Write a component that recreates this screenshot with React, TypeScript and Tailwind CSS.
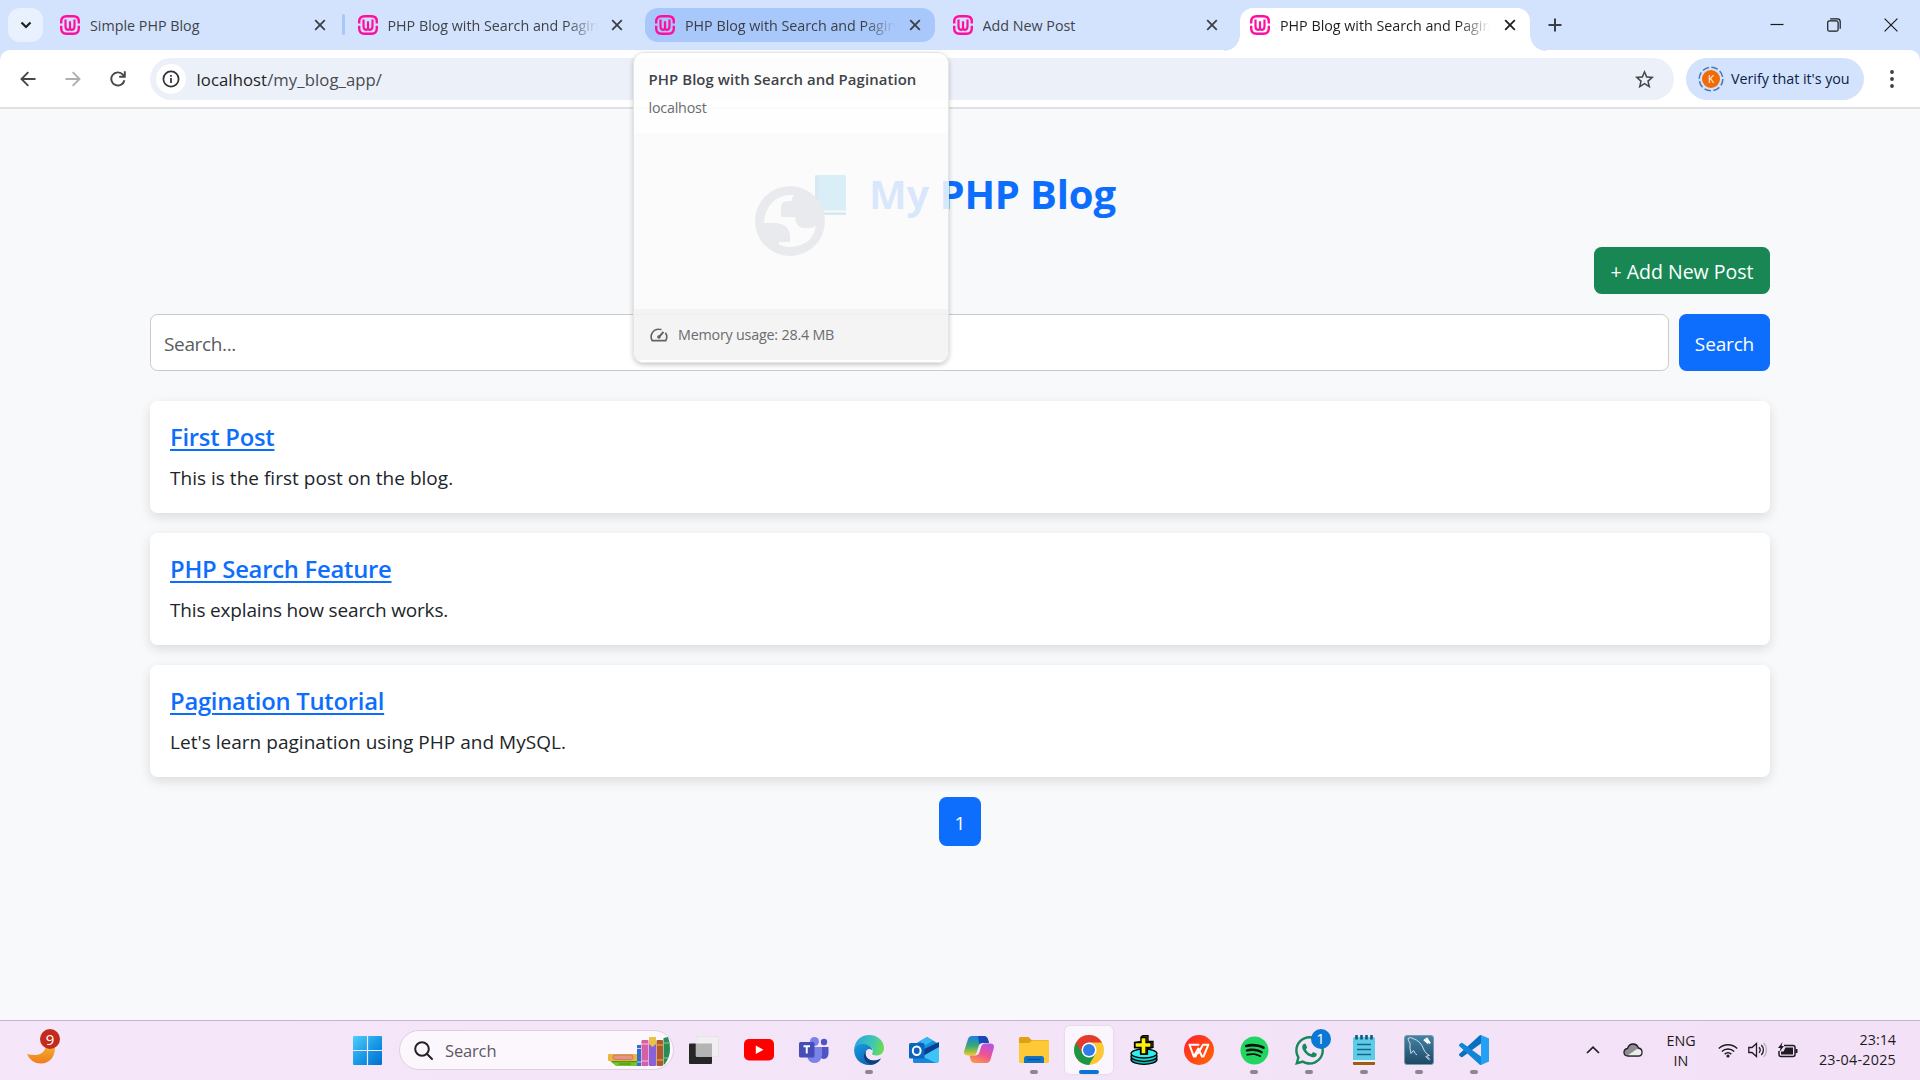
import type { ReactNode } from "react";
import { FaWhatsapp, FaSpotify } from "react-icons/fa";

function WampIcon() {
  return (
    <svg viewBox="0 0 20 20" className="h-5 w-5 shrink-0" fill="none" stroke="#ff0fa0">
      <path
        d="M1.200 8.400V6.500Q1.200 1.300 6.500 1.300H13.500Q18.800 1.300 18.800 6.500V8.400M1.200 10.800V13.500Q1.200 18.700 6.500 18.700H13.500Q18.800 18.700 18.800 13.500V10.800"
        strokeWidth="2.400"
      />
      <path d="M5.500 4.600V11Q5.500 14.800 8 14.800Q10 14.800 10 12.200V6.200V12.200Q10 14.800 12 14.800Q14.500 14.800 14.500 11V4.600" strokeWidth="2.200" />
    </svg>
  );
}

function Cross({ color }: { color: string }) {
  return (
    <svg viewBox="0 0 12 12" className="h-3 w-3 shrink-0" stroke={color} strokeWidth="1.800">
      <path d="M1.200 1.200L10.800 10.800M10.800 1.200L1.200 10.800" />
    </svg>
  );
}

function Tab({ title, state = "idle", fade }: { title: string; state?: "idle" | "hover" | "active"; fade?: boolean }) {
  const bg =
    state === "active"
      ? "bg-white rounded-t-[13px] h-[43px] pb-[9px] text-[#1f1f1f]"
      : state === "hover"
        ? "bg-[#a8c7fa] rounded-[13px] h-[34px] text-[#3b3f45]"
        : "h-[34px] text-[#3f4349]";
  return (
    <div className={`relative flex w-[290px] shrink-0 items-center pl-[10px] pr-[14.5px] ${bg}`}>
      {state === "active" && (
        <>
          <span className="absolute -left-4 bottom-0 h-4 w-4 bg-[radial-gradient(circle_at_0_0,#d3e3fd_15.5px,#fff_16px)]" />
          <span className="absolute -right-4 bottom-0 h-4 w-4 bg-[radial-gradient(circle_at_100%_0,#d3e3fd_15.5px,#fff_16px)]" />
        </>
      )}
      <WampIcon />
      <div
        className={`mt-[2px] ml-[10px] w-[210px] overflow-hidden text-[14.3px] leading-5 whitespace-nowrap ${
          fade ? "tracking-[-0.01px] [mask-image:linear-gradient(90deg,#000_85%,transparent)]" : ""
        }`}
      >
        {title}
      </div>
      <span className="ml-auto">
        <Cross color={state === "active" ? "#1f1f1f" : "#3b3f45"} />
      </span>
    </div>
  );
}

function TabStrip() {
  return (
    <div className="flex h-[50px] items-start bg-[#d3e3fd] pl-2 pt-2">
      <div className="flex h-[34px] w-[35px] items-center justify-center rounded-[12px] bg-[#e9f1fe]">
        <svg viewBox="0 0 12 8" className="h-2 w-3" fill="none" stroke="#1f1f1f" strokeWidth="2.2">
          <path d="M1.500 1.500L6 6L10.500 1.500" />
        </svg>
      </div>
      <div className="ml-[7px] flex">
        <Tab title="Simple PHP Blog" />
        <div className="flex w-[7.5px] justify-center pt-[6px]">
          <span className="h-[21px] w-[3px] rounded-full bg-[#a8c7fa]" />
        </div>
        <Tab title="PHP Blog with Search and Pagination" fade />
        <div className="w-[7.5px]" />
        <Tab title="PHP Blog with Search and Pagination" state="hover" fade />
        <div className="w-[7.5px]" />
        <Tab title="Add New Post" />
        <div className="w-[7.5px]" />
        <Tab title="PHP Blog with Search and Pagination" state="active" fade />
      </div>
      <svg viewBox="0 0 14 14" className="ml-[18px] mt-[10px] h-[14px] w-[14px]" stroke="#3b3f45" strokeWidth="2">
        <path d="M7 .5V13.500M.5 7H13.500" />
      </svg>
      <div className="ml-auto mr-[22px] mt-[9.5px] flex gap-[43px]">
        <svg viewBox="0 0 14 14" className="h-[14px] w-[14px]" stroke="#1a1a1a" strokeWidth="1.200">
          <path d="M.5 6.500H13.500" />
        </svg>
        <svg viewBox="0 0 14 14" className="h-[14px] w-[14px]" fill="none" stroke="#1a1a1a" strokeWidth="1.200">
          <rect x=".7" y="2.800" width="10.400" height="10.400" rx="1.800" />
          <path d="M3.200 .8H10.400Q13.200 .8 13.200 3.600V10.800" />
        </svg>
        <svg viewBox="0 0 14 14" className="h-[14px] w-[14px]" stroke="#1a1a1a" strokeWidth="1.200">
          <path d="M.6 .6L13.400 13.400M13.400 .6L.6 13.400" />
        </svg>
      </div>
    </div>
  );
}

function Toolbar() {
  return (
    <div className="bg-[#d3e3fd]">
      <div className="flex h-[59px] items-center rounded-t-[10px] border-b-2 border-[#e0e1e2] bg-white pl-[20px] pr-[25px]">
        <svg viewBox="0 0 16 16" className="h-4 w-4" fill="none" stroke="#474747" strokeWidth="1.900">
          <path d="M15.500 8H1.800M8.300 1.200L1.500 8L8.300 14.800" />
        </svg>
        <svg viewBox="0 0 16 16" className="ml-[28.5px] h-4 w-4" fill="none" stroke="#adafb2" strokeWidth="1.900">
          <path d="M.5 8H14.200M7.700 1.200L14.500 8L7.700 14.800" />
        </svg>
        <svg viewBox="0 0 16 16" className="ml-[29px] h-4 w-4" fill="none" stroke="#474747" strokeWidth="1.900">
          <path d="M14.400 9.200A6.600 6.600 0 1 1 12.900 3.600L14.600 5.400M14.800 .3V5.800H9.200" />
        </svg>
        <div className="mt-[1px] ml-[24.5px] flex h-[42px] w-[1524px] items-center rounded-full bg-[#ecf0f9] pl-[6px] pr-[18px]">
          <span className="flex h-[30px] w-[30px] items-center justify-center rounded-full bg-white">
            <svg viewBox="0 0 18 18" className="h-[18px] w-[18px]" fill="none" stroke="#303134" strokeWidth="1.700">
              <circle cx="9" cy="9" r="7.600" />
              <path d="M9 8V13M9 5V6.700" />
            </svg>
          </span>
          <span className="mt-[1px] ml-[10.5px] text-[16.7px] leading-6 tracking-[0.08px] text-[#484b50]">
            <span className="text-[#1f1f1f]">localhost</span>/my_blog_app/
          </span>
          <svg viewBox="0 0 24 24" className="ml-auto h-[23px] w-[23px]" fill="#474747">
            <path d="M22 9.240l-7.190-.62L12 2 9.190 8.630 2 9.240l5.460 4.730L5.820 21 12 17.270 18.180 21l-1.630-7.030L22 9.240zM12 15.400l-3.760 2.270 1-4.280-3.320-2.880 4.380-.38L12 6.100l1.710 4.040 4.380.38-3.320 2.880 1 4.280L12 15.400z" />
          </svg>
        </div>
        <div className="ml-3 flex h-[42px] w-[178px] items-center rounded-full bg-[#d3e3fd] pl-3">
          <span className="relative flex h-[26px] w-[26px] items-center justify-center">
            <svg viewBox="0 0 26 26" className="h-[26px] w-[26px]">
              <circle cx="13" cy="13" r="11.800" fill="none" stroke="#4f75b0" strokeWidth="1.500" strokeDasharray="6.700 2.570" />
              <circle cx="13" cy="13" r="9" fill="#f26c05" />
            </svg>
            <span className="absolute text-[10px] leading-none text-white">K</span>
          </span>
          <span className="ml-[7px] text-[14.3px] leading-5 tracking-[-0.03px] whitespace-nowrap text-[#0a2149]">
            Verify that it's you
          </span>
        </div>
        <svg viewBox="0 0 4 18" className="ml-auto h-[18px] w-[6px]" fill="#3c4043">
          <circle cx="2" cy="2" r="1.900" />
          <circle cx="2" cy="9" r="1.900" />
          <circle cx="2" cy="16" r="1.900" />
        </svg>
      </div>
    </div>
  );
}

function HoverCard() {
  return (
    <div className="absolute top-[52px] left-[633px] flex h-[311px] w-[316px] flex-col overflow-hidden rounded-[11px] border border-[#e4e5e7] shadow-[0_2px_5px_rgba(0,0,0,0.22)]">
      <div className="h-[80px] bg-white/86 pt-[16px] pl-[14.5px]">
        <div className="text-[14.9px] leading-5 font-semibold tracking-[0.09px] whitespace-nowrap text-[#3f4348]">
          PHP Blog with Search and Pagination
        </div>
        <div className="mt-[9px] text-[14.3px] leading-5 tracking-[-0.2px] text-[#6a6c70]">localhost</div>
      </div>
      <div className="flex h-[176px] items-center justify-center bg-[#fcfcfc]/86 pr-[2px]">
        <svg viewBox="0 0 70 70" className="h-[70px] w-[70px]">
          <path
            fill="#e9eaee"
            fillRule="evenodd"
            d="M35 0A35 35 0 1 1 35 70A35 35 0 1 1 35 0ZM36 9C22 9 10 19 9 37H20Q35 38 35 51V56H24V58.500Q29 61 35 61Q58 60 61 39Q59 42 54 42H48Q40 40 40 31H26V21Q26 15 34 15H36.500Q37 12 39 9Z"
          />
        </svg>
      </div>
      <div className="flex h-[51px] items-center bg-[#f2f2f2]/86 pl-[15.5px]">
        <svg viewBox="0 0 18 14" className="h-[14px] w-[18px]" fill="none" stroke="#5f6368" strokeWidth="1.600">
          <path d="M11.500 1.500Q10.500 1.200 9 1.200A7.600 7.600 0 0 0 2.200 12.600H15.800A7.600 7.600 0 0 0 15.400 4.800" />
          <path d="M8.700 9.300L13.500 3.800" strokeWidth="2" />
          <circle cx="8.900" cy="9" r="1" fill="#5f6368" />
        </svg>
        <span className="ml-[10.5px] text-[14.3px] leading-5 tracking-[-0.2px] whitespace-nowrap text-[#6a6c70]">
          Memory usage: 28.4 MB
        </span>
      </div>
      <div className="flex-1 bg-white/90" />
    </div>
  );
}

const posts = [
  { title: "First Post", text: "This is the first post on the blog.", tracking: "tracking-[0.02px]" },
  { title: "PHP Search Feature", text: "This explains how search works.", tracking: "tracking-[-0.17px]" },
  { title: "Pagination Tutorial", text: "Let's learn pagination using PHP and MySQL.", tracking: "tracking-[0.03px]" },
];

function BlogPage() {
  return (
    <main className="h-[911px] bg-[#f8f9fb] px-[150px] pt-[57px]">
      <h1 className="flex h-[56px] items-center pl-[665px]">
        <svg viewBox="0 0 31 40" className="mt-[1px] h-10 w-[31px]">
          <rect width="31" height="40" rx="2" fill="#0a9cd4" />
          <rect width="4" height="40" rx="1.500" fill="#0878ad" />
          <rect x="2" y="35.500" width="29" height="2" fill="#e8f4fa" />
          <rect x="2" y="37.500" width="29" height="2.500" rx="1" fill="#0878ad" />
        </svg>
        <span className="ml-[23px] text-[40px] leading-[56px] font-bold tracking-[-0.15px] whitespace-nowrap text-[#0d6efd]">
          My PHP Blog
        </span>
      </h1>
      <div className="mt-[25px] flex justify-end">
        <button className="flex h-[47px] w-[176px] items-center justify-center rounded-[7.5px] bg-[#198754] pt-[3px] text-[19.5px] text-white">
          + Add New Post
        </button>
      </div>
      <div className="mt-5 flex gap-[10px]">
        <div className="flex h-[57px] flex-1 items-center rounded-[7.5px] border border-[#c9cacc] bg-white pt-[3px] pl-[13px] text-[19px] tracking-[-0.35px] text-[#595c5f]">
          Search...
        </div>
        <button className="flex h-[57px] w-[91px] items-center justify-center rounded-[7.5px] bg-[#0d6efd] pt-[3px] text-[19px] tracking-[-0.15px] text-white">
          Search
        </button>
      </div>
      <div className="mt-[30px] flex flex-col gap-5">
        {posts.map((p) => (
          <article key={p.title} className="h-[112px] rounded-[7.5px] bg-white px-5 pt-5 shadow-[0_4px_12px_rgba(0,0,0,0.12)]">
            <h2 className="text-[23.8px] leading-[33px] font-semibold tracking-[-0.25px] text-[#0d6efd]">
              <span className="underline decoration-2 underline-offset-[3px]">{p.title}</span>
            </h2>
            <p className="mt-[9px] text-[19px] leading-[30px] text-[#212529]">
              <span className={p.tracking}>{p.text}</span>
            </p>
          </article>
        ))}
      </div>
      <div className="mt-5 flex justify-center">
        <span className="flex h-[49px] w-[42px] items-center justify-center rounded-[7.5px] bg-[#0d6efd] pt-[3px] text-[19px] text-white">1</span>
      </div>
    </main>
  );
}

function AppSlot({ children, running, active }: { children: ReactNode; running?: boolean; active?: boolean }) {
  return (
    <div className="relative flex w-[55px] items-center justify-center">
      <div className={`flex h-12 w-12 items-center justify-center rounded-[5px] ${active ? "bg-white/65 shadow-[0_0_2px_rgba(0,0,0,0.15)]" : ""}`}>
        {children}
      </div>
      {running && <span className="absolute bottom-0 h-1 w-2 rounded-full bg-[#8f8592]" />}
      {active && <span className="absolute bottom-0 h-1 w-5 rounded-full bg-[#0a74d4]" />}
    </div>
  );
}

const sq = "h-[30px] w-[30px]";

function TaskApps() {
  return (
    <div className="ml-[2.5px] flex h-12">
      <AppSlot>
        <svg viewBox="0 0 30 30" className={sq}>
          <rect y="8.500" width="23" height="20.500" rx="1" fill="#262626" />
          <rect x="7" y="1.500" width="22.500" height="20" rx="1" fill="#f0eef1" stroke="#dcd8de" strokeWidth=".5" />
          <rect x="7" y="8.500" width="16" height="13" fill="#b4b4b4" />
        </svg>
      </AppSlot>
      <AppSlot>
        <svg viewBox="0 0 30 30" className={sq}>
          <rect y="4" width="30" height="21.500" rx="5" fill="#f00" />
          <path d="M11.800 10.500V19L19.500 14.800Z" fill="#fff" />
        </svg>
      </AppSlot>
      <AppSlot>
        <svg viewBox="0 0 30 30" className={sq}>
          <circle cx="25" cy="7" r="3.200" fill="#4f55c4" />
          <path d="M20 12H29.500V19Q29 24 24 24L20 22Z" fill="#4f55c4" />
          <circle cx="15.500" cy="6.500" r="4.500" fill="#7b83eb" />
          <path d="M8 12H23V20Q22 28 15.500 28Q9 28 8 20Z" fill="#7b83eb" />
          <rect y="7" width="15.500" height="15.500" rx="1.500" fill="#454db8" />
          <path d="M4.500 11.300H11M7.750 11V18.500" stroke="#fff" strokeWidth="1.900" />
        </svg>
      </AppSlot>
      <AppSlot running>
        <svg viewBox="0 0 30 30" className={sq}>
          <defs>
            <linearGradient id="edgeTop" x1="0" y1="0.300" x2="1" y2="0.500">
              <stop offset="0" stopColor="#2ba6e0" />
              <stop offset=".6" stopColor="#3cc7b5" />
              <stop offset="1" stopColor="#6fdc4e" />
            </linearGradient>
            <linearGradient id="edgeLow" x1="0" y1="0" x2="0.800" y2="1">
              <stop offset="0" stopColor="#1a9be0" />
              <stop offset="1" stopColor="#0a5bb0" />
            </linearGradient>
          </defs>
          <path d="M.2 14C1 5.500 7 0 15 0C24 0 30 6 30 13C30 18 26.500 20.500 22.500 20.500C19.500 20.500 17.800 19.500 18 18.500C19.500 17 19.500 12 14 10.500C8 9 1.500 11 .2 14Z" fill="url(#edgeTop)" />
          <path d="M.2 14C2 9.500 8 8 13 9.800C16.500 11 18.500 13.500 18.500 16C16 12 11 14.500 11.500 19C12 24.500 19 28 27 23.500C24 28 20 30 15 30C6 30 -.5 23 .2 14Z" fill="url(#edgeLow)" />
          <path d="M11.500 19C12 24.500 19 28 27 23.500C24.500 27.500 21.500 29 18 29.700C10 28 7.500 20 12.500 15.500C11.700 16.500 11.400 17.800 11.500 19Z" fill="#12407c" />
        </svg>
      </AppSlot>
      <AppSlot>
        <svg viewBox="0 0 30 30" className={sq}>
          <path d="M6 9L18 2L30 9V15H6Z" fill="#1490df" />
          <path d="M12 5.500L18 2L24 5.500L12 13Z" fill="#35b8f1" />
          <path d="M4 27V20L13 17L30 12V26Q30 28 28 28H6Q4 28 4 27Z" fill="#3dc3f5" />
          <path d="M13 15L30 7V12L14 21Z" fill="#0a3f8f" />
          <path d="M4 17L27 28H6Q4 28 4 26Z" fill="#1a86d8" />
          <rect y="8" width="15.500" height="15.500" rx="1.500" fill="#0b64bd" />
          <ellipse cx="7.700" cy="15.700" rx="3.900" ry="4.300" fill="none" stroke="#fff" strokeWidth="2" />
        </svg>
      </AppSlot>
      <AppSlot>
        <svg viewBox="0 0 30 30" className={sq}>
          <defs>
            <linearGradient id="copA" x1="0" y1="0" x2="0" y2="1">
              <stop offset="0" stopColor="#1b7fe6" />
              <stop offset=".5" stopColor="#35a878" />
              <stop offset="1" stopColor="#e8d022" />
            </linearGradient>
            <linearGradient id="copB" x1="0.700" y1="0" x2="0.200" y2="1">
              <stop offset="0" stopColor="#b653e0" />
              <stop offset=".5" stopColor="#ee5590" />
              <stop offset="1" stopColor="#fb9a4b" />
            </linearGradient>
          </defs>
          <path d="M8 1H20Q23 1 24 4.500L25 8H18Q15.500 8 14.700 11L12.500 18Q11.500 20.500 9 20.500H4Q-1 20.500 .3 15.500L4 4Q5 1 8 1Z" fill="url(#copA)" />
          <path d="M14 1H20Q23 1 24 4.500L25 8H18Q16 8 15.300 9.500Z" fill="#1847b8" />
          <path d="M22 28H10.500Q7.500 28 6.500 24.500L5.500 20.500H11Q14.500 20.500 15.300 17.500L17.300 11Q18 8.500 21 8.500H26Q31 8.500 29.700 13.500L26.500 24.500Q25.500 28 22 28Z" fill="url(#copB)" />
        </svg>
      </AppSlot>
      <AppSlot running>
        <svg viewBox="0 0 30 30" className={sq}>
          <path d="M0 3.500Q0 2 1.500 2H9.500L12.500 5H28Q30 5 30 7V12H0Z" fill="#e0a00f" />
          <path d="M0 8H10L13 5.500H28.500Q30 5.500 30 7V26.500Q30 28 28.500 28H1.500Q0 28 0 26.500Z" fill="#fdc936" />
          <path d="M5 28V23.500Q5 21 7.500 21H22.500Q25 21 25 23.500V28Z" fill="#1272c4" />
          <path d="M8.500 24.500H21.500" stroke="#0b4f8f" strokeWidth="1.200" />
        </svg>
      </AppSlot>
      <AppSlot active>
        <svg viewBox="0 0 30 30" className={sq}>
          <circle cx="15" cy="15" r="15" fill="#fcc934" />
          <path d="M2.010 7.500A15 15 0 0 0 15 30L21.500 18.750L15 15Z" fill="#1e9446" />
          <path d="M2.010 7.500A15 15 0 0 1 28 7.500H15L8.500 18.750Z" fill="#e33b2e" />
          <circle cx="15" cy="15" r="7.500" fill="#fff" />
          <circle cx="15" cy="15" r="6" fill="#2f7de9" />
        </svg>
      </AppSlot>
      <AppSlot>
        <svg viewBox="0 0 30 30" className={sq} stroke="#000" strokeWidth="1.300">
          <ellipse cx="15" cy="24.500" rx="13" ry="4.800" fill="#12b5b5" />
          <ellipse cx="15" cy="21.500" rx="13" ry="4.800" fill="#19dada" />
          <ellipse cx="15" cy="18.500" rx="13" ry="4.500" fill="#2ff0f0" />
          <path d="M12.500 1.500L14 .7H19V6.500H24V12.500L18.500 13.500V19H11.500V12.500H5.500V7.500L12.500 6.500Z" fill="#6b6500" />
          <path d="M12 2.500H17V7.500H22V12.500H17V19H12V12.500H6V7.500H12Z" fill="#ffef0a" />
        </svg>
      </AppSlot>
      <AppSlot>
        <svg viewBox="0 0 30 30" className={sq} fill="none">
          <defs>
            <linearGradient id="wps" x1="0" y1="0" x2="1" y2="1">
              <stop offset="0" stopColor="#ff1f2d" />
              <stop offset="1" stopColor="#ff6a00" />
            </linearGradient>
          </defs>
          <circle cx="15" cy="15" r="15" fill="url(#wps)" />
          <path d="M5.500 9.800H14.500M5.500 9.800L9.800 21.500L14.300 13.500L18 21.500H19.500L24.300 9.800H19L14.300 18M9.800 21.500H11.500L13 18.500" stroke="#fff" strokeWidth="2" strokeLinejoin="round" strokeLinecap="round" />
        </svg>
      </AppSlot>
      <AppSlot running>
        <span className="relative flex h-[29px] w-[29px] items-center justify-center">
          <span className="absolute h-6 w-6 rounded-full bg-[#111]" />
          <FaSpotify className="relative h-[29px] w-[29px] text-[#1fd660]" />
        </span>
      </AppSlot>
      <AppSlot running>
        <span className="relative">
          <FaWhatsapp className="h-[33px] w-[33px] text-[#16895a]" />
          <span className="absolute -top-[5px] -right-[5px] flex h-5 w-5 items-center justify-center rounded-full bg-[#0a78d4] text-[15px] leading-none text-white">
            1
          </span>
        </span>
      </AppSlot>
      <AppSlot running>
        <svg viewBox="0 0 22 30" className="h-[30px] w-[22px]">
          <rect y="26" width="22" height="4" rx="1" fill="#a35a14" />
          <rect y="2" width="22" height="25" rx="1.500" fill="#5fcbe6" />
          <rect y="25" width="22" height="2" fill="#e9f3f6" />
          <path d="M4 9.500H18M4 14.500H18M4 19.500H18" stroke="#11678c" strokeWidth="1.700" />
          <path d="M3.500 0V4.500M8.500 0V4.500M13.500 0V4.500M18.500 0V4.500" stroke="#0d5878" strokeWidth="2.500" />
        </svg>
      </AppSlot>
      <AppSlot running>
        <svg viewBox="0 0 30 30" className={sq} fill="none">
          <defs>
            <linearGradient id="mysql" x1="0" y1="0" x2="0" y2="1">
              <stop offset="0" stopColor="#4583a5" />
              <stop offset="1" stopColor="#1d4866" />
            </linearGradient>
          </defs>
          <rect x=".5" y=".5" width="29" height="29" rx="2.500" fill="url(#mysql)" stroke="#7f98a8" />
          <path d="M4 3.500Q6 1.500 9 3.500Q17 6 20 15Q21 18 25.500 20.500L22.500 21L26 24.500M4 3.500Q4 6 6 8Q5.500 13 7 18.500L9.500 15.500Q11 19 13 20M21.500 21.500L25.500 25" stroke="#cfe0ea" strokeWidth="1" />
          <path d="M20 4.500L23 7L22.500 3L26 8.500" stroke="#fff" strokeWidth="2" />
        </svg>
      </AppSlot>
      <AppSlot running>
        <svg viewBox="0 0 30 30" className={sq}>
          <path d="M22 0L30 3.500V26.500L22 30Z" fill="#25a1f3" />
          <path d="M22 0V8.500L3.500 22Q2.500 22.500 1.700 21.800L.3 20.500Q-.5 19.500 .5 18.700L20.500 .6Q21.200 0 22 0Z" fill="#0b6fc0" />
          <path d="M22 30V21.500L3.500 8Q2.500 7.500 1.700 8.200L.3 9.500Q-.5 10.500 .5 11.300L20.500 29.400Q21.200 30 22 30Z" fill="#0f86d6" />
        </svg>
      </AppSlot>
    </div>
  );
}

function Books() {
  return (
    <svg viewBox="0 0 64 30" className="h-[30px] w-16">
      <rect x="1" y="17" width="30" height="7" rx="1" fill="#e8b93c" />
      <rect x="6" y="18" width="20" height="4.500" rx="2" fill="#e89386" stroke="#b8604c" strokeWidth=".6" />
      <path d="M3 24H31V29H9Z" fill="#7cc22b" />
      <path d="M5 24.700H30M12 27H24" stroke="#3f8a1e" strokeWidth="1" />
      <rect x="30" y="8" width="4" height="21" fill="#2f6fd0" />
      <path d="M30 11.500H34M30 25H34" stroke="#bcd6f5" strokeWidth="1" />
      <rect x="34.500" y="3" width="7" height="26" rx="1" fill="#d660a8" />
      <path d="M34.500 7H41.500M34.500 24H41.500" stroke="#f4c4de" strokeWidth="1.200" />
      <rect x="42" y="0" width="7" height="29" rx="1" fill="#8a62d8" />
      <path d="M42 0H49V7L45.500 10L42 7Z" fill="#e9c04a" />
      <rect x="49.500" y="3" width="6.500" height="26" rx="1" fill="#b3582c" />
      <path d="M49.500 8H56M49.500 23H56" stroke="#e8b93c" strokeWidth="1.200" />
      <path d="M56.500 1L61 0Q63 5 63 12Q63 20 58 27L56.500 28Z" fill="#2a8c55" />
      <path d="M57 6H62M57 21H61" stroke="#8fd08f" strokeWidth="1.200" />
    </svg>
  );
}

function Taskbar() {
  return (
    <footer className="flex h-[60px] items-start border-t border-[#c3b5ca] bg-linear-to-r from-[#f5e6f9] to-[#f3e2f7] pt-[5px] text-[#1f1b22]">
      <div className="relative mt-[15px] ml-[27px] h-6 w-7">
        <svg viewBox="0 0 28 24" className="h-6 w-7">
          <defs>
            <linearGradient id="moon" x1="0" y1="0" x2="0" y2="1">
              <stop offset="0" stopColor="#f3b63a" />
              <stop offset="1" stopColor="#ee7d1b" />
            </linearGradient>
          </defs>
          <path d="M0 13Q4 22.500 14 22.500Q27 22 28 7L20 2Q18 14 8 14Q3 14 0 13Z" fill="url(#moon)" />
        </svg>
        <span className="absolute -top-[12px] left-[13px] flex h-5 w-5 items-center justify-center rounded-full bg-[#c42b1c] text-[15px] leading-none text-white">
          9
        </span>
      </div>
      <svg viewBox="0 0 29 29" className="mt-[10px] ml-[298px] h-[29px] w-[29px]">
        <defs>
          <linearGradient id="win" x1="0" y1="0" x2="1" y2="1">
            <stop offset="0" stopColor="#4fd0fb" />
            <stop offset=".55" stopColor="#1696e4" />
            <stop offset="1" stopColor="#0070d0" />
          </linearGradient>
        </defs>
        <path d="M1 0H13.900V13.900H0V1Q0 0 1 0ZM15.100 0H28Q29 0 29 1V13.900H15.100ZM0 15.100H13.900V29H1Q0 29 0 28ZM15.100 15.100H29V28Q29 29 28 29H15.100Z" fill="url(#win)" />
      </svg>
      <div className="mt-1 ml-[17px] flex h-10 w-[275px] items-center rounded-full border border-[#ddcfe3] bg-[#fcf7fd] pl-[14px]">
        <svg viewBox="0 0 19 19" className="h-[19px] w-[19px]" fill="none" stroke="#242127" strokeWidth="2">
          <circle cx="8" cy="8" r="6.800" />
          <path d="M12.800 12.800L18 18" strokeLinecap="round" />
        </svg>
        <span className="mt-[2px] ml-[12px] text-[16.5px] tracking-[-0.15px] text-[#5d5961]">Search</span>
        <span className="mt-[3px] mr-[2px] ml-auto">
          <Books />
        </span>
      </div>
      <TaskApps />
      <div className="ml-auto flex h-12 items-center pr-6">
        <svg viewBox="0 0 14 8" className="h-2 w-[14px]" fill="none" stroke="#1f1b22" strokeWidth="1.700">
          <path d="M1 7L7 1.200L13 7" />
        </svg>
        <svg viewBox="0 0 20 14" className="ml-[23px] h-[14px] w-5">
          <path d="M5 13Q1 13 1 9.500Q1 6 4.500 5.500Q6 1 10 1Q14 1 15.500 5Q19 5.500 19 9.200Q19 13 15.500 13Z" fill="#8f8d92" stroke="#1f1b22" strokeWidth="1.300" />
          <path d="M5 12.300L14 6Q18.300 6 18.300 9.300Q18.200 12.300 15.500 12.300Z" fill="#ececec" />
        </svg>
        <div className="mt-[1px] ml-[23px] flex w-[30px] flex-col items-center text-[14.3px] leading-5">
          <span>ENG</span>
          <span>IN</span>
        </div>
        <svg viewBox="0 0 20 15" className="ml-[22px] h-[15px] w-5" fill="none" stroke="#1f1b22" strokeWidth="1.400">
          <path d="M.8 5.500A13 13 0 0 1 19.200 5.500M3.800 8.500A8.800 8.800 0 0 1 16.200 8.500M6.600 11.200A4.800 4.800 0 0 1 13.400 11.200" />
          <circle cx="10" cy="13" r="1.600" fill="#1f1b22" stroke="none" />
        </svg>
        <svg viewBox="0 0 20 16" className="ml-[10px] h-4 w-5" fill="none" stroke="#1f1b22" strokeWidth="1.300">
          <path d="M.8 5.500H4L8.500 1.500V14.500L4 10.500H.8Z" />
          <path d="M11 5.300A4 4 0 0 1 11 10.700M13.300 3A7 7 0 0 1 13.300 13" />
          <path d="M15.600 1A10 10 0 0 1 15.600 15" stroke="#b9adbd" />
        </svg>
        <svg viewBox="0 0 20 16" className="ml-[10px] h-4 w-5" fill="none" stroke="#1f1b22" strokeWidth="1.500">
          <path d="M6 3.500H15Q17 3.500 17 5.500V12.500Q17 14.500 15 14.500H3Q1 14.500 1 12.500V9" />
          <path d="M7.500 5.500H15V12.500H3V9.500H5.500Z" fill="#1f1b22" stroke="none" />
          <path d="M17.500 7H19.500V11H17.500Z" fill="#1f1b22" stroke="none" />
          <path d="M4.500 0L0 6H2.500L1.500 10L6 4H3.500Z" fill="#1f1b22" stroke="none" />
        </svg>
        <div className="ml-[20px] flex w-[78px] flex-col items-end text-[14.3px] leading-5">
          <span>23:14</span>
          <span className="tracking-[0.25px] whitespace-nowrap">23-04-2025</span>
        </div>
      </div>
    </footer>
  );
}

export default function App() {
  return (
    <div className="relative h-[1080px] w-[1920px] overflow-hidden font-['Open_Sans',sans-serif]">
      <TabStrip />
      <Toolbar />
      <BlogPage />
      <Taskbar />
      <HoverCard />
    </div>
  );
}
